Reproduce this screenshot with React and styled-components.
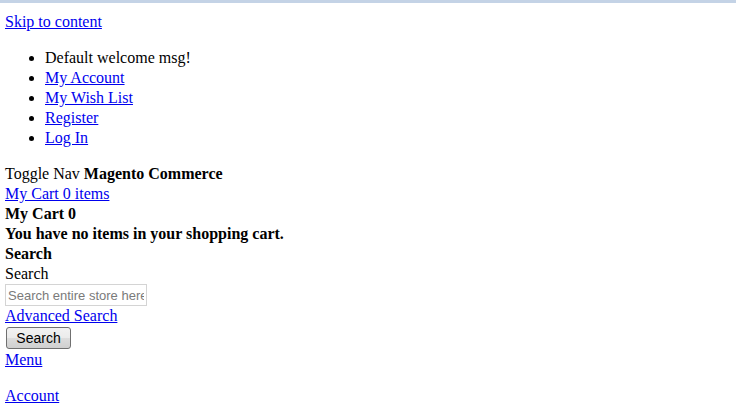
import React from "react";
import styled, { createGlobalStyle } from "styled-components";

const Global = createGlobalStyle`
  html, body { margin: 0; padding: 0; background: #fff; }
  body {
    font-family: "Liberation Serif", "Times New Roman", serif;
    font-size: 16px;
    line-height: 20px;
    color: #000;
  }
`;

const Page = styled.div`
  border-top: 3px solid #c4d3e6;
  padding: 9px 5px 0 5px;
`;

const Link = styled.a`
  color: #0000ee;
  text-decoration: underline;
  display: ${(p) => (p.$block ? "block" : "inline")};
`;

const HeaderLinks = styled.ul`
  margin: 16px 0;
  padding-left: 40px;
  list-style: disc;
`;

const Item = styled.li``;

const Line = styled.div`
  font-weight: ${(p) => (p.$bold ? "bold" : "normal")};
`;

const Strong = styled.strong`
  font-weight: bold;
`;

const Input = styled.input`
  display: block;
  box-sizing: border-box;
  width: 142px;
  height: 22px;
  margin: 0;
  padding: 1px 2px;
  border: 1px solid #d4d4d4;
  font-family: "Liberation Sans", Arial, sans-serif;
  font-size: 13px;
  color: #000;
  &::placeholder { color: #7a7a7a; }
`;

const Button = styled.button`
  display: block;
  box-sizing: border-box;
  width: 65px;
  height: 22px;
  margin: 1px 0 1px 1px;
  padding: 0;
  border: 1px solid #707070;
  border-radius: 3px;
  background: linear-gradient(#f2f2f2 0%, #ebebeb 50%, #dddddd 51%, #cfcfcf 100%);
  font-family: "Liberation Sans", Arial, sans-serif;
  font-size: 14px;
  color: #000;
`;

const Nav = styled.div`
  margin-bottom: 16px;
`;

export default function App() {
  return (
    <>
      <Global />
      <Page>
        <Link href="#" $block>Skip to content</Link>
        <HeaderLinks>
          <Item>Default welcome msg!</Item>
          <Item><Link href="#">My Account</Link></Item>
          <Item><Link href="#">My Wish List</Link></Item>
          <Item><Link href="#">Register</Link></Item>
          <Item><Link href="#">Log In</Link></Item>
        </HeaderLinks>
        <Line>Toggle Nav <Strong>Magento Commerce</Strong></Line>
        <Link href="#" $block>My Cart 0 items</Link>
        <Line $bold>My Cart 0</Line>
        <Line $bold>You have no items in your shopping cart.</Line>
        <Line $bold>Search</Line>
        <Line>Search</Line>
        <Input placeholder="Search entire store here..." />
        <Link href="#" $block>Advanced Search</Link>
        <Button>Search</Button>
        <Nav><Link href="#" $block>Menu</Link></Nav>
        <Link href="#" $block>Account</Link>
      </Page>
    </>
  );
}
